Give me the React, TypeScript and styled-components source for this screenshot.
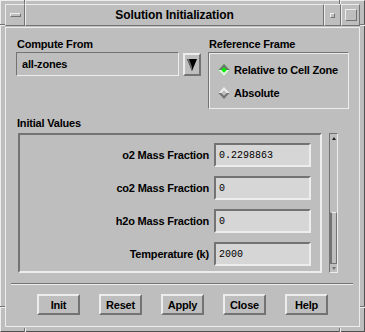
import React from 'react';
import styled, { createGlobalStyle } from 'styled-components';

const bg = '#bebebe';
const light = '#ededed';
const dark = '#737373';
const field = '#d6d6d6';

const GlobalStyle = createGlobalStyle`
  html, body {
    margin: 0;
    padding: 0;
    background: ${bg};
  }
  * {
    box-sizing: border-box;
  }
`;

const Window = styled.div`
  position: relative;
  width: 365px;
  height: 332px;
  background: ${bg};
  border: 1px solid;
  border-color: ${light} #505050 #505050 ${light};
  padding: 3px 4px 4px 4px;
  display: flex;
  flex-direction: column;
  gap: 1px;
  font-family: "Liberation Sans", Arial, sans-serif;
  color: #000;
`;

// resize-handle notches cut into the window frame
const Notch = styled.span<{ $x: number; $y: number; $vertical?: boolean }>`
  position: absolute;
  left: ${(p) => p.$x}px;
  top: ${(p) => p.$y}px;
  width: ${(p) => (p.$vertical ? 2 : 5)}px;
  height: ${(p) => (p.$vertical ? 4 : 2)}px;
  ${(p) =>
    p.$vertical
      ? `border-left: 1px solid ${dark}; border-right: 1px solid ${light};`
      : `border-top: 1px solid ${dark}; border-bottom: 1px solid ${light};`}
`;

const TitleBar = styled.div`
  height: 22px;
  display: flex;
`;

const Raised = styled.div`
  border: 1px solid;
  border-color: ${light} ${dark} ${dark} ${light};
  display: flex;
  align-items: center;
  justify-content: center;
`;

const MenuButton = styled(Raised)`
  width: 20px;
`;

const MenuBar = styled.span`
  width: 11px;
  height: 4px;
  border: 1px solid;
  border-color: ${light} ${dark} ${dark} ${light};
`;

const Title = styled(Raised)`
  flex: 1;
  font-size: 12px;
  font-weight: bold;
  letter-spacing: -0.1px;
`;

const IconButton = styled(Raised)<{ $w: number }>`
  width: ${(p) => p.$w}px;
`;

const IconSquare = styled.span<{ $s: number }>`
  width: ${(p) => p.$s}px;
  height: ${(p) => p.$s}px;
  border: 1px solid;
  border-color: ${light} ${dark} ${dark} ${light};
`;

const Client = styled.div`
  flex: 1;
  border: 1px solid ${light};
  padding: 10px 10px 0 10px;
  display: flex;
  flex-direction: column;
`;

const Label = styled.div`
  font-size: 11px;
  font-weight: bold;
  line-height: 13px;
  height: 13px;
  letter-spacing: -0.2px;
  padding-left: 1px;
  white-space: nowrap;
`;

const TopRow = styled.div`
  display: flex;
  gap: 7px;
  height: 71px;
`;

const LeftCol = styled.div`
  width: 185px;
  display: flex;
  flex-direction: column;
  gap: 1px;
`;

const RightCol = styled.div`
  flex: 1;
  display: flex;
  flex-direction: column;
  gap: 1px;
`;

const DropRow = styled.div`
  display: flex;
  align-items: flex-start;
  gap: 4px;
`;

const DropField = styled.div`
  width: 163px;
  height: 24px;
  border: 1px solid;
  border-color: ${dark} ${light} ${light} ${dark};
  font-size: 11px;
  font-weight: bold;
  letter-spacing: -0.2px;
  padding-left: 5px;
  display: flex;
  align-items: center;
`;

const ArrowButton = styled(Raised)`
  width: 18px;
  height: 23px;
  margin-top: 1px;
  border-width: 2px;
`;

const GroupBox = styled.div`
  height: 57px;
  border: 1px solid;
  border-color: ${dark} ${light} ${light} ${dark};
  box-shadow: inset 1px 1px 0 ${light}, 1px 1px 0 ${dark} inset;
  padding: 9px 0 0 9px;
  display: flex;
  flex-direction: column;
  gap: 8px;
`;

const RadioRow = styled.div`
  display: flex;
  align-items: center;
  height: 15px;
  gap: 5px;
  font-size: 11px;
  font-weight: bold;
  letter-spacing: -0.2px;
`;

const DiamondSlot = styled.span`
  width: 11px;
  height: 11px;
  display: flex;
  align-items: center;
  justify-content: center;
`;

const Diamond = styled.span<{ $on?: boolean }>`
  width: 8px;
  height: 8px;
  transform: rotate(45deg);
  border: 2px solid;
  border-color: ${(p) => (p.$on ? `${dark} ${light} ${light} ${dark}` : `${light} ${dark} ${dark} ${light}`)};
  background: ${(p) => (p.$on ? '#00f000' : bg)};
`;

const SectionLabel = styled(Label)`
  margin-top: 8px;
`;

const ScrollRow = styled.div`
  display: flex;
  gap: 7px;
  margin-top: 3px;
  margin-left: 2px;
`;

const ScrollFrame = styled.div`
  width: 304px;
  height: 140px;
  border: 2px solid;
  border-color: ${dark} ${light} ${light} ${dark};
  padding: 8px 9px 0 0;
  overflow: hidden;
  display: flex;
  flex-direction: column;
  gap: 9px;
`;

const FieldRow = styled.div`
  display: flex;
  justify-content: flex-end;
  align-items: center;
  gap: 5px;
  height: 24px;
  flex-shrink: 0;
`;

const FieldLabel = styled.span`
  font-size: 11px;
  font-weight: bold;
  letter-spacing: -0.2px;
  white-space: nowrap;
`;

const Input = styled.div`
  width: 97px;
  height: 24px;
  background: ${field};
  border: 2px solid;
  border-color: ${dark} ${light} ${light} ${dark};
  font-family: "Liberation Mono", "Courier New", monospace;
  font-size: 10px;
  padding-left: 3px;
  display: flex;
  align-items: center;
`;

const ScrollBar = styled.div`
  width: 9px;
  height: 140px;
  border: 1px solid;
  border-color: ${dark} ${light} ${light} ${dark};
  display: flex;
  flex-direction: column;
  align-items: center;
`;

const ArrowTip = styled.span<{ $down?: boolean }>`
  width: 0;
  height: 0;
  margin: 3px 0 2px;
  border-left: 2px solid transparent;
  border-right: 2px solid transparent;
  ${(p) => (p.$down ? `border-top: 3px solid ${dark};` : `border-bottom: 3px solid #202020;`)}
`;

const Track = styled.div`
  flex: 1;
  width: 100%;
  display: flex;
  flex-direction: column;
  justify-content: flex-end;
`;

const Thumb = styled.div`
  height: 52px;
  width: 100%;
  border: 1px solid;
  border-color: ${light} ${dark} ${dark} ${light};
  border-left: 2px solid ${dark};
`;

const Separator = styled.div`
  height: 2px;
  margin: 10px -4px 0 -5px;
  border-top: 1px solid ${dark};
  border-bottom: 1px solid ${light};
`;

const ButtonRow = styled.div`
  display: flex;
  justify-content: center;
  gap: 19px;
  margin-top: 9px;
`;

const Button = styled.button`
  width: 43px;
  height: 21px;
  padding: 0;
  background: ${bg};
  border: 2px solid;
  border-color: ${light} ${dark} ${dark} ${light};
  font-family: "Liberation Sans", Arial, sans-serif;
  font-size: 11px;
  font-weight: bold;
  letter-spacing: -0.2px;
  color: #000;
`;

const fields = [
  { label: 'o2 Mass Fraction', value: '0.2298863' },
  { label: 'co2 Mass Fraction', value: '0' },
  { label: 'h2o Mass Fraction', value: '0' },
  { label: 'Temperature (k)', value: '2000' },
];

const buttons = ['Init', 'Reset', 'Apply', 'Close', 'Help'];

export default function App() {
  return (
    <>
      <GlobalStyle />
      <Window>
        <Notch $vertical $x={23} $y={-1} />
        <Notch $vertical $x={338} $y={-1} />
        <Notch $vertical $x={23} $y={327} />
        <Notch $vertical $x={338} $y={327} />
        <Notch $x={-1} $y={23} />
        <Notch $x={359} $y={23} />
        <Notch $x={-1} $y={305} />
        <Notch $x={359} $y={305} />
        <TitleBar>
          <MenuButton>
            <MenuBar />
          </MenuButton>
          <Title>Solution Initialization</Title>
          <IconButton $w={17}>
            <IconSquare $s={5} />
          </IconButton>
          <IconButton $w={19}>
            <IconSquare $s={12} />
          </IconButton>
        </TitleBar>
        <Client>
          <TopRow>
            <LeftCol>
              <Label>Compute From</Label>
              <DropRow>
                <DropField>all-zones</DropField>
                <ArrowButton>
                  <svg width="10" height="12" viewBox="0 0 10 12">
                    <polygon points="0,0 10,0 5,12" fill="#000" />
                    <polygon points="0,0 2,0 5,8 5,12" fill="#6a6a6a" />
                  </svg>
                </ArrowButton>
              </DropRow>
            </LeftCol>
            <RightCol>
              <Label>Reference Frame</Label>
              <GroupBox>
                <RadioRow>
                  <DiamondSlot>
                    <Diamond $on />
                  </DiamondSlot>
                  Relative to Cell Zone
                </RadioRow>
                <RadioRow>
                  <DiamondSlot>
                    <Diamond />
                  </DiamondSlot>
                  Absolute
                </RadioRow>
              </GroupBox>
            </RightCol>
          </TopRow>
          <SectionLabel>Initial Values</SectionLabel>
          <ScrollRow>
            <ScrollFrame>
              {fields.map((f) => (
                <FieldRow key={f.label}>
                  <FieldLabel>{f.label}</FieldLabel>
                  <Input>{f.value}</Input>
                </FieldRow>
              ))}
            </ScrollFrame>
            <ScrollBar>
              <ArrowTip />
              <Track>
                <Thumb />
              </Track>
              <ArrowTip $down />
            </ScrollBar>
          </ScrollRow>
          <Separator />
          <ButtonRow>
            {buttons.map((b) => (
              <Button key={b}>{b}</Button>
            ))}
          </ButtonRow>
        </Client>
      </Window>
    </>
  );
}
